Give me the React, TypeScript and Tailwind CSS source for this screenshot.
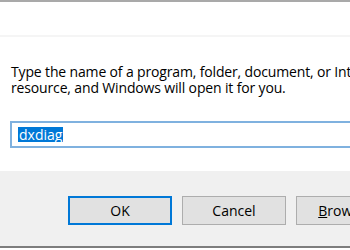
import React from 'react';

const font = { fontFamily: '"Segoe UI", "Open Sans", "Noto Sans", sans-serif' };

const App = () => {
  return (
    <div className="relative w-[350px] h-[250px] overflow-hidden bg-white text-black" style={font}>
      {/* title bar remnant */}
      <div className="h-[2px] bg-[#a9a9a9]" />
      <div className="h-[35px] border-b-2 border-[#f5f5f5]" />

      {/* body */}
      <div className="h-[134px] pl-[11px] pt-[27px]">
        <p className="whitespace-nowrap text-[14px] leading-[16px] tracking-[-0.15px]">
          Type the name of a program, folder, document, or Internet
          <br />
          resource, and Windows will open it for you.
        </p>
        <div className="ml-[-1px] mt-[25px] flex h-[27px] w-[400px] items-center border-2 border-[#7fb1df] pl-[6px]">
          <span className="bg-[#0078d7] px-[1px] text-[14px] leading-[15px] text-white">dxdiag</span>
        </div>
      </div>

      {/* footer */}
      <div className="flex h-[75px] gap-[10px] bg-[#f0f0f0] pl-[68px] pt-[25px]">
        <button className="h-[29px] w-[104px] shrink-0 border-2 border-[#0078d7] bg-[#e1e1e1] text-[14px]">OK</button>
        <button className="h-[29px] w-[104px] shrink-0 border border-[#adadad] bg-[#e1e1e1] text-[14px]">Cancel</button>
        <button className="h-[29px] w-[104px] shrink-0 border border-[#adadad] bg-[#e1e1e1] text-[14px]">
          <span className="underline">B</span>rowse...
        </button>
      </div>
      <div className="h-[2px] bg-[#7d7d7d]" />
    </div>
  );
};

export default App;
